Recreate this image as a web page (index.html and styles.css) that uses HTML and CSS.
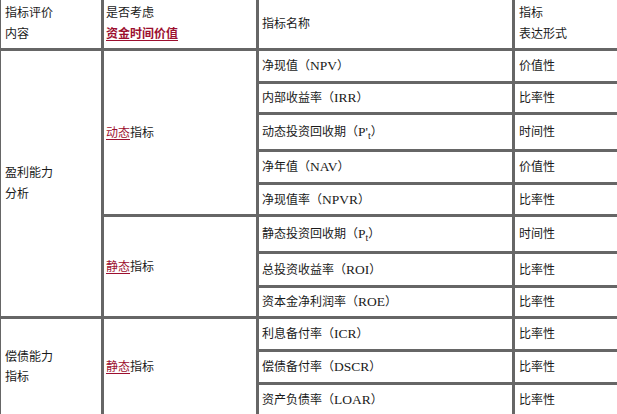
FILE: index.html
```html
<!DOCTYPE html>
<html lang="zh-CN">
<head>
<meta charset="utf-8">
<title>指标评价</title>
<link rel="stylesheet" href="styles.css">
</head>
<body>
<div class="table">
  <div class="cell c1 h"><div class="lines"><div>指标评价</div><div>内容</div></div></div>
  <div class="cell c2 h"><div class="lines"><div>是否考虑</div><div><a class="em strong">资金时间价值</a></div></div></div>
  <div class="cell c3 h">指标名称</div>
  <div class="cell c4 h"><div class="lines"><div>指标</div><div>表达形式</div></div></div>

  <div class="cell c1 span-profit"><div class="lines"><div>盈利能力</div><div>分析</div></div></div>
  <div class="cell c2 span-dyn"><span><a class="em">动态</a>指标</span></div>
  <div class="cell c3">净现值（<span class="lat">NPV</span>）</div>
  <div class="cell c4">价值性</div>
  <div class="cell c3">内部收益率（<span class="lat">IRR</span>）</div>
  <div class="cell c4">比率性</div>
  <div class="cell c3">动态投资回收期（<span class="lat">P'<sub>t</sub></span>）</div>
  <div class="cell c4">时间性</div>
  <div class="cell c3">净年值（<span class="lat">NAV</span>）</div>
  <div class="cell c4">价值性</div>
  <div class="cell c3">净现值率（<span class="lat">NPVR</span>）</div>
  <div class="cell c4">比率性</div>

  <div class="cell c2 span-static"><span><a class="em">静态</a>指标</span></div>
  <div class="cell c3">静态投资回收期（<span class="lat">P<sub>t</sub></span>）</div>
  <div class="cell c4">时间性</div>
  <div class="cell c3">总投资收益率（<span class="lat">ROI</span>）</div>
  <div class="cell c4">比率性</div>
  <div class="cell c3">资本金净利润率（<span class="lat">ROE</span>）</div>
  <div class="cell c4">比率性</div>

  <div class="cell c1 span-debt"><div class="lines tight"><div>偿债能力</div><div>指标</div></div></div>
  <div class="cell c2 span-debt"><span><a class="em">静态</a>指标</span></div>
  <div class="cell c3">利息备付率（<span class="lat">ICR</span>）</div>
  <div class="cell c4">比率性</div>
  <div class="cell c3">偿债备付率（<span class="lat">DSCR</span>）</div>
  <div class="cell c4">比率性</div>
  <div class="cell c3">资产负债率（<span class="lat">LOAR</span>）</div>
  <div class="cell c4">比率性</div>
</div>
</body>
</html>
```
FILE: styles.css
```css
html, body {
  margin: 0;
  padding: 0;
  overflow: hidden;
  background: #fff;
}

.table {
  display: grid;
  grid-template-columns: 100px 152px 253px 130px;
  grid-template-rows: 48px 30px 28px 34px 30px 29px 34px 31px 28px 30px 30px 30px;
  gap: 3px;
  padding: 3px;
  margin: -3px 0 0 -2px;
  width: max-content;
  background: #666;
  font-family: "Liberation Serif", "Noto Sans CJK SC", serif;
  font-size: 12px;
  color: #1a1a1a;
}

.cell {
  background: #fff;
  display: flex;
  align-items: center;
  padding: 0 3px;
  line-height: 16px;
  white-space: nowrap;
}

.c1 { grid-column: 1; padding-left: 4px; }
.c2 { grid-column: 2; padding-left: 2px; }
.c3 { grid-column: 3; }
.c4 { grid-column: 4; padding-left: 4px; }

.span-profit { grid-row: 2 / span 8; }
.span-dyn { grid-row: 2 / span 5; }
.span-static { grid-row: 7 / span 3; }
.span-debt { grid-row: 10 / span 3; }

.lines > div {
  line-height: 21px;
}

.lines.tight > div {
  line-height: 20px;
}

.lat {
  font-size: 13.5px;
}

.em {
  color: #9c0f2f;
  text-decoration: underline;
  text-underline-offset: 2px;
}

.strong {
  font-weight: bold;
}

sub {
  font-size: 10px;
  line-height: 0;
  vertical-align: -3px;
}
```
